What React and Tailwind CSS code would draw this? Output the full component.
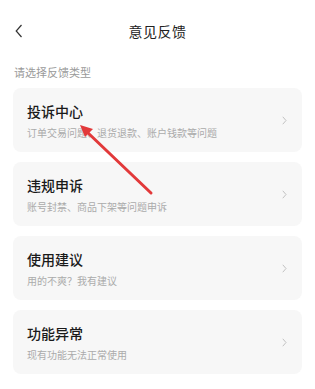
import React from "react";

const items = [
  { t: "投诉中心", s: "订单交易问题、退货退款、账户钱款等问题" },
  { t: "违规申诉", s: "账号封禁、商品下架等问题申诉" },
  { t: "使用建议", s: "用的不爽？我有建议" },
  { t: "功能异常", s: "现有功能无法正常使用" },
];

export default function App() {
  return (
    <div
      className="relative w-[315px] h-[389px] bg-white overflow-hidden"
      style={{ fontFamily: '"Noto Sans CJK SC", "Noto Sans", sans-serif' }}
    >
      <div className="grid grid-cols-[1fr_auto_1fr] items-center h-[62px] px-[14px]">
        <svg width="8" height="14" viewBox="0 0 8 14" className="ml-[1px]">
          <path d="M6.5 1 L1.2 7 L6.5 13" fill="none" stroke="#333" strokeWidth="1.2" />
        </svg>
        <div className="text-[14px] leading-[20px] text-[#222] tracking-[0.5px]">意见反馈</div>
        <div />
      </div>
      <div className="px-[14px] text-[11px] leading-[16px] text-[#9a9a9a] mt-[2px]">请选择反馈类型</div>
      <div className="flex flex-col gap-[10px] px-[13px] mt-[8px]">
        {items.map((it) => (
          <div
            key={it.t}
            className="h-[64px] rounded-[8px] bg-[#f7f7f7] flex items-center pl-[14px] pr-[14px]"
          >
            <div className="flex-1 flex flex-col">
              <div className="text-[14px] leading-[20px] text-[#1a1a1a] font-medium">{it.t}</div>
              <div className="text-[10px] leading-[14px] text-[#ababab] mt-[5px]">{it.s}</div>
            </div>
            <svg width="5" height="9" viewBox="0 0 5 9" className="mr-[1px]">
              <path d="M0.8 0.8 L4 4.5 L0.8 8.2" fill="none" stroke="#bbb" strokeWidth="0.9" />
            </svg>
          </div>
        ))}
      </div>
      <svg
        className="absolute left-0 top-0 pointer-events-none"
        width="315"
        height="389"
        viewBox="0 0 315 389"
      >
        <line x1="151" y1="193" x2="86" y2="131" stroke="#e2393a" strokeWidth="3" strokeLinecap="round" />
        <polygon points="80,125 93,129 85,137" fill="#e2393a" />
      </svg>
    </div>
  );
}
